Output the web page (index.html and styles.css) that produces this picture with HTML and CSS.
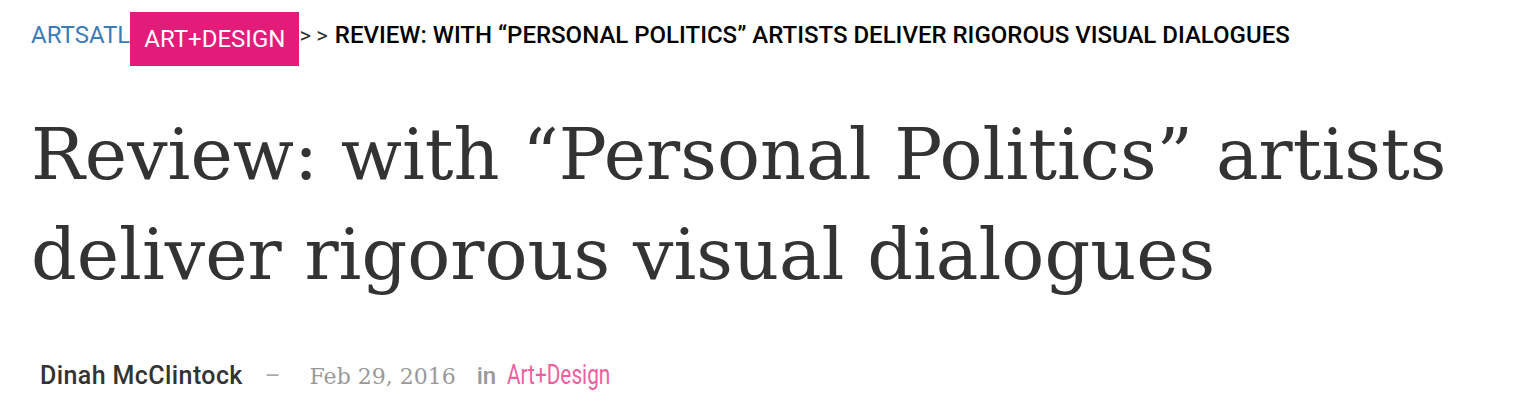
FILE: index.html
```html
<!DOCTYPE html>
<html lang="en">
<head>
<meta charset="utf-8">
<title>Review: with “Personal Politics” artists deliver rigorous visual dialogues</title>
<link rel="stylesheet" href="styles.css">
</head>
<body>
<div class="page">
  <nav class="crumbs">
    <a class="home" href="#">ARTSATL</a>
    <a class="cat" href="#">ART+DESIGN</a>
    <span class="sep">&gt; &gt;</span>
    <span class="current">REVIEW: WITH “PERSONAL POLITICS” ARTISTS DELIVER RIGOROUS VISUAL DIALOGUES</span>
  </nav>
  <h1 class="title">Review: with “Personal Politics” artists deliver rigorous visual dialogues</h1>
  <div class="meta">
    <span class="author">Dinah McClintock</span>
    <span class="dash">–</span>
    <span class="date">Feb 29, 2016</span>
    <span class="in">in</span>
    <a class="mcat" href="#"><span class="mcat-text">Art+Design</span></a>
  </div>
</div>
</body>
</html>
```
FILE: styles.css
```css
html, body {
  margin: 0;
  padding: 0;
  background: #fff;
}
a { text-decoration: none; }
.page {
  padding: 12px 0 0 31px;
  font-family: Roboto, "Liberation Sans", sans-serif;
}
.crumbs {
  display: flex;
  align-items: flex-start;
  height: 54px;
  font-size: 24px;
}
.home {
  color: #3b7cb6;
  padding-top: 9px;
  line-height: 28px;
}
.cat {
  background: #e31b79;
  color: #fff;
  height: 54px;
  display: flex;
  align-items: center;
  padding: 0 14px 1px;
  box-sizing: border-box;
  font-size: 24px;
}
.sep {
  color: #333;
  font-size: 22px;
  margin-left: 0;
  padding-top: 10px;
  line-height: 28px;
}
.current {
  color: #000;
  font-weight: 500;
  font-size: 24px;
  margin-left: 7px;
  padding-top: 9px;
  line-height: 28px;
  white-space: nowrap;
}
.title {
  margin: 39px 0 0 0;
  max-width: 1470px;
  font-family: "DejaVu Serif", "Liberation Serif", serif;
  font-weight: 400;
  font-size: 71.5px;
  line-height: 100px;
  color: #333;
}
.meta {
  display: flex;
  align-items: baseline;
  margin: 54px 0 0 9px;
  font-size: 24px;
}
.author {
  color: #333;
  font-weight: 500;
  font-size: 25px;
  letter-spacing: 0.4px;
}
.dash {
  color: #aaa;
  margin-left: 22px;
  font-size: 24px;
}
.date {
  margin-left: 29px;
  font-family: "DejaVu Serif", serif;
  color: #999;
  font-size: 22px;
}
.in {
  margin-left: 21px;
  color: #999;
  font-weight: 500;
  font-size: 24px;
}
.mcat {
  margin-left: 11px;
  color: #ec5f9f;
  display: inline-block;
  width: 102px;
}
.mcat-text {
  display: inline-block;
  font-size: 27px;
  transform: scaleX(0.77);
  transform-origin: left center;
  white-space: nowrap;
}
```
